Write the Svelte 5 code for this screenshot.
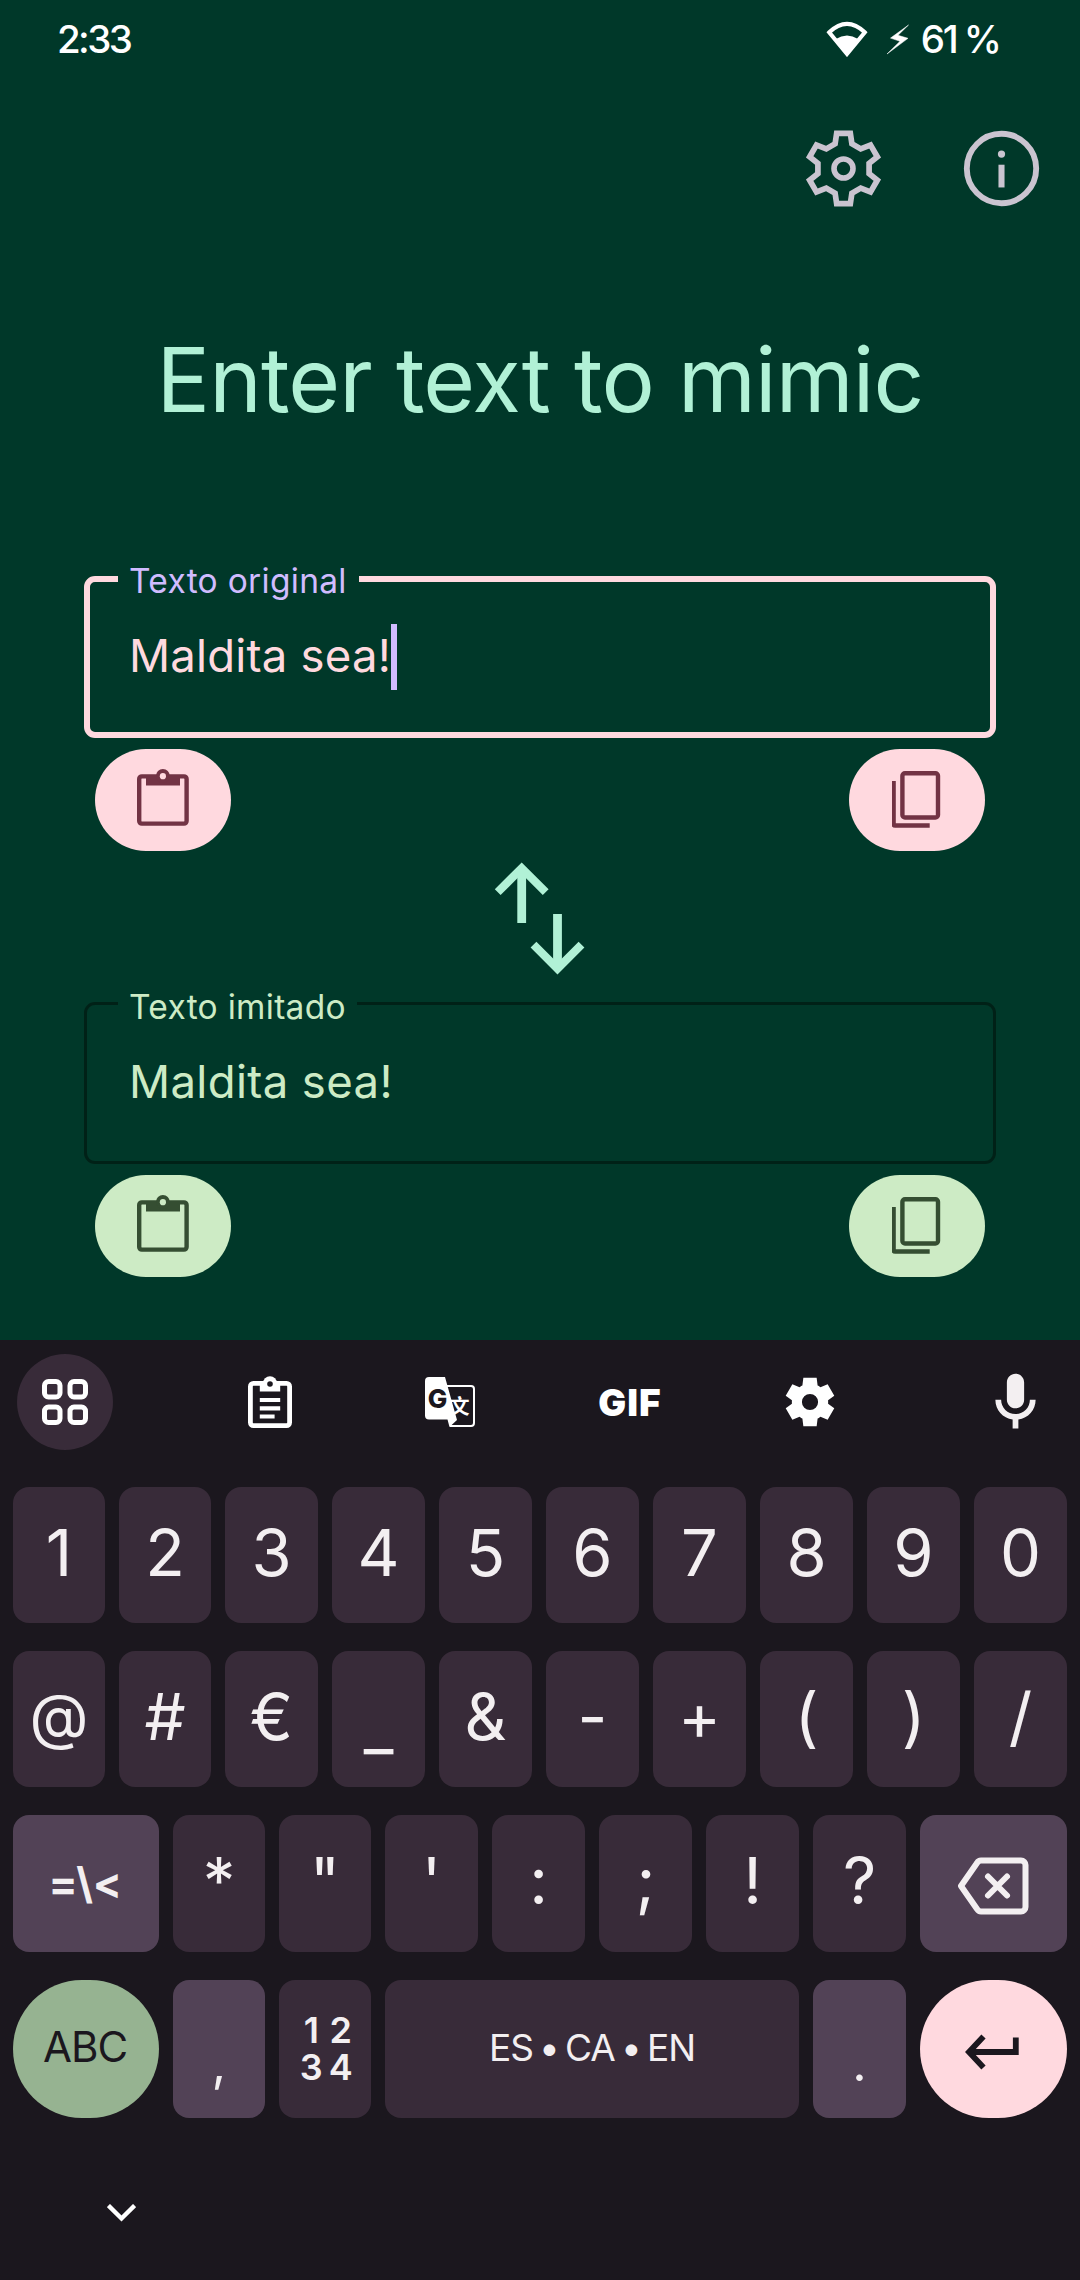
<script>
  const fields = [
    { id: 'original', label: 'Texto original', value: 'Maldita sea!', focused: true },
    { id: 'mimic', label: 'Texto imitado', value: 'Maldita sea!', focused: false }
  ];

  const digits = ['1', '2', '3', '4', '5', '6', '7', '8', '9', '0'];
  const symbols = ['@', '#', '€', '_', '&', '-', '+', '(', ')', '/'];
  const punctuation = ['*', '"', "'", ':', ';', '!', '?'];

  // One gear tooth, repeated every 60 degrees around the origin.
  const tooth = [[-11, -26.5], [-9.3, -38], [9.3, -38], [11, -26.5]];
  const gearPoints = [0, 1, 2, 3, 4, 5]
    .flatMap((k) => {
      const a = (k * Math.PI) / 3;
      return tooth.map(([x, y]) => [
        (x * Math.cos(a) - y * Math.sin(a)).toFixed(2),
        (x * Math.sin(a) + y * Math.cos(a)).toFixed(2)
      ]);
    })
    .join(' ');

  const gear =
    'm9.25 22-.4-3.2q-.325-.125-.612-.3-.288-.175-.563-.375L4.7 19.375l-2.75-4.75 2.575-1.95Q4.5 12.5 4.5 12.337v-.675q0-.162.025-.337L1.95 9.375l2.75-4.75 2.975 1.25q.275-.2.575-.375.3-.175.6-.3l.4-3.2h5.5l.4 3.2q.325.125.612.3.288.175.563.375l2.975-1.25 2.75 4.75-2.575 1.95q.025.175.025.337v.675q0 .163-.025.338l2.575 1.95-2.75 4.75-2.975-1.25q-.275.2-.575.375-.3.175-.6.3l-.4 3.2Z';
</script>

{#snippet pasteIcon()}
  <svg width="52" height="57" viewBox="0 0 52 57" fill="none">
    <rect x="2.2" y="7.4" width="47.4" height="47.2" rx="2.6" stroke="currentColor" stroke-width="4.4" />
    <path d="M9 6H43V16.5H9z" fill="currentColor" />
    <circle cx="25.9" cy="7" r="6.9" fill="currentColor" />
    <circle class="hole" cx="25.9" cy="7.2" r="3.1" />
  </svg>
{/snippet}

{#snippet copyIcon()}
  <svg width="50" height="62" viewBox=".8 -4.5 50 62" fill="none" stroke="currentColor" stroke-width="4.4">
    <rect x="11.2" y="2.7" width="35.6" height="44.3" rx="2.6" />
    <path d="M2.4 10.5v43a1.5 1.5 0 0 0 1.5 1.5H38.5" />
  </svg>
{/snippet}

{#snippet field(f)}
  <section class="field {f.focused ? 'primary' : 'secondary'}">
    <div class="outline">
      <span class="label">{f.label}</span>
      <div class="value">
        <span class="content">{f.value}</span>
        {#if f.focused}<i class="caret"></i>{/if}
      </div>
    </div>
    <div class="actions">
      <button class="pill" aria-label="Paste">{@render pasteIcon()}</button>
      <button class="pill" aria-label="Copy">{@render copyIcon()}</button>
    </div>
  </section>
{/snippet}

<div class="screen">
  <header class="status">
    <span class="time">2:33</span>
    <div class="indicators">
      <svg width="42" height="36" viewBox="0 0 42 36" fill="none">
        <path d="M3.2 11.3Q21-5.5 38.8 11.3L21 33z" stroke="#fff" stroke-width="4" />
        <path d="M9.8 18Q21 11 32.2 18L21 34z" fill="#fff" />
      </svg>
      <svg class="bolt" width="24" height="31" viewBox="-.5 -.5 24 31" fill="#fff" stroke="#fff" stroke-width=".5">
        <path d="M22 .5 4 13.6l9.5 3.2L.5 29.5 21.5 13.8l-10-3z" />
      </svg>
      <span class="battery">61 %</span>
    </div>
  </header>

  <nav class="top-actions">
    <svg width="91" height="91" viewBox="-45.5 -45.5 91 91" fill="none" stroke="#cac4d0">
      <clipPath id="gear-edge"><polygon points={gearPoints} /></clipPath>
      <polygon points={gearPoints} stroke-width="11.4" clip-path="url(#gear-edge)" />
      <circle r="9.5" stroke-width="5.6" />
    </svg>
    <svg width="91" height="91" viewBox="0 0 24 24" fill="none" stroke="#cac4d0">
      <circle cx="12" cy="12" r="9.15" stroke-width="1.55" />
      <path d="M12 11v6" stroke-width="1.6" />
      <circle cx="12" cy="8.2" r=".95" fill="#cac4d0" stroke="none" />
    </svg>
  </nav>

  <h1>Enter text to mimic</h1>

  {@render field(fields[0])}

  <div class="swap">
    <svg width="104" height="151" viewBox="0 0 104 151" fill="none" stroke="#b1f1d6">
      <path d="M33.7 17v55" stroke-width="8.8" />
      <path d="M9.7 41.2l24-24 24 24" stroke-width="8.2" />
      <path d="M69.5 63v55" stroke-width="8.8" />
      <path d="M45.5 93.6l24 24 24-24" stroke-width="8.2" />
    </svg>
  </div>

  {@render field(fields[1])}

  <div class="keyboard">
    <div class="tools">
      <div class="apps">
        <svg width="46" height="46" viewBox="0 0 46 46" fill="none" stroke="#fff" stroke-width="5">
          <rect x="2.5" y="2.5" width="15.5" height="15.5" rx="4" />
          <rect x="28" y="2.5" width="15.5" height="15.5" rx="4" />
          <rect x="2.5" y="28" width="15.5" height="15.5" rx="4" />
          <rect x="28" y="28" width="15.5" height="15.5" rx="4" />
        </svg>
      </div>
      <svg width="44" height="52" viewBox="0 0 44 52" fill="none">
        <rect x="2.4" y="7.4" width="39.2" height="42.2" rx="3" stroke="#fff" stroke-width="4.8" />
        <path d="M11.8 6h20.4v9.5H11.8z" fill="#fff" />
        <circle cx="22" cy="7.2" r="7" fill="#fff" />
        <circle cx="22" cy="8" r="2.8" fill="#1b171e" />
        <path d="M11.8 24h20.4M11.8 32.3h20.4M11.8 40.5h14.8" stroke="#fff" stroke-width="4.2" />
      </svg>
      <svg width="50" height="50" viewBox="0 0 50 50">
        <path d="M20 9H46a3 3 0 0 1 3 3V46a3 3 0 0 1-3 3H25" fill="none" stroke="#fff" stroke-width="2" />
        <path d="M4 0H20L32 43 24.5 50 22.5 42.5H4a4 4 0 0 1-4-4V4a4 4 0 0 1 4-4z" fill="#fff" />
        <text class="g-mark" x="12.5" y="31" text-anchor="middle">G</text>
        <text class="han-mark" x="34.5" y="36.5" text-anchor="middle">文</text>
      </svg>
      <span class="gif">GIF</span>
      <svg width="58" height="58" viewBox="0 0 24 24" fill="#fff">
        <path fill-rule="evenodd" d={gear + 'M15.35 12a3.35 3.35 0 1 0-6.7 0a3.35 3.35 0 1 0 6.7 0z'} />
      </svg>
      <svg class="mic" width="69" height="69" viewBox="0 0 24 24" fill="#f3eff1">
        <path
          d="M12 14c1.66 0 3-1.34 3-3V5c0-1.66-1.34-3-3-3S9 3.34 9 5v6c0 1.66 1.34 3 3 3zm5-3c0 2.76-2.24 5-5 5s-5-2.24-5-5H5c0 3.53 2.61 6.43 6 6.92V21h2v-3.08c3.39-.49 6-3.39 6-6.92h-2z"
        />
      </svg>
    </div>

    <div class="rows">
      <div class="row ten">
        {#each digits as key}<div class="key">{key}</div>{/each}
      </div>
      <div class="row ten">
        {#each symbols as key}<div class="key" class:at={key === '@'} class:drop={key === '_'}>{key}</div>{/each}
      </div>
      <div class="row nine">
        <div class="key accent more">=\&lt;</div>
        {#each punctuation as key}<div class="key">{key}</div>{/each}
        <div class="key accent backspace">
          <svg width="72" height="58" viewBox="0 0 72 58" fill="none" stroke="#f3eff1" stroke-width="6" stroke-linejoin="round">
            <path d="M24 3.5H64a4.5 4.5 0 0 1 4.5 4.5V50a4.5 4.5 0 0 1-4.5 4.5H24a4.5 4.5 0 0 1-3.8-2.2L4 29 20.2 5.7A4.5 4.5 0 0 1 24 3.5z" />
            <path d="M31 19.5 50 38.5M50 19.5 31 38.5" stroke-linecap="round" />
          </svg>
        </div>
      </div>
      <div class="row bottom">
        <div class="key round abc">ABC</div>
        <div class="key accent low">,</div>
        <div class="key numpad"><span>1</span><span>2</span><span>3</span><span>4</span></div>
        <div class="key space">ES • CA • EN</div>
        <div class="key accent low">.</div>
        <div class="key round enter">
          <svg width="54" height="36" viewBox="0 0 54 36" fill="none" stroke="#1b171e" stroke-width="5.8">
            <path d="M4 18H50.8V3.5" />
            <path d="M18.5 2.5 4 18 18.5 33.5" />
          </svg>
        </div>
      </div>
    </div>

    <svg class="dismiss" width="29" height="18" viewBox="0 0 29 18" fill="none" stroke="#fff" stroke-width="4.4">
      <path d="M1.4 1.5 14.5 14.5 27.6 1.5" />
    </svg>
  </div>
</div>

<style>
  :global(body) {
    background: #003829;
  }

  .screen {
    box-sizing: border-box;
    width: 1080px;
    height: 2280px;
    display: flex;
    flex-direction: column;
    overflow: hidden;
    background: #003829;
    font-family: Inter, Roboto, 'Liberation Sans', sans-serif;
  }

  svg {
    display: block;
    flex: none;
  }

  .status {
    height: 78px;
    flex: none;
    display: flex;
    align-items: center;
    justify-content: space-between;
    padding: 0 80px 0 57px;
    color: #fff;
    font-size: 38.5px;
    font-weight: 500;
  }

  .time {
    letter-spacing: -2.6px;
  }

  .indicators {
    display: flex;
    align-items: center;
  }

  .bolt {
    margin: 0 11px 0 18px;
  }

  .battery {
    letter-spacing: -2.1px;
    word-spacing: -1px;
  }

  .top-actions {
    display: flex;
    justify-content: flex-end;
    gap: 67px;
    margin-top: 45px;
    padding-right: 33px;
  }

  h1 {
    margin: 112px 0 142px;
    color: #b1f1d6;
    font-size: 89px;
    line-height: 108px;
    font-weight: 400;
    text-align: center;
    white-space: nowrap;
    letter-spacing: -0.9px;
  }

  .field {
    padding: 0 84px;
  }

  .outline {
    position: relative;
    box-sizing: border-box;
    height: 162px;
    border-radius: 11px;
  }

  .primary .outline {
    border: 6px solid #ffd9df;
    padding: 42px 0 0 39px;
    color: #ffd9df;
  }

  .secondary .outline {
    border: 3px solid #002117;
    padding: 45px 0 0 42px;
    color: #cdebc5;
  }

  .label {
    position: absolute;
    top: -21px;
    left: 28px;
    width: 241px;
    box-sizing: border-box;
    padding-left: 11px;
    background: #003829;
    color: #d0bcff;
    font-size: 33.5px;
    line-height: 40px;
    letter-spacing: 0.3px;
    white-space: nowrap;
  }

  .secondary .label {
    top: -18px;
    left: 31px;
    width: 239px;
    color: #cdebc5;
  }

  .value {
    display: flex;
    align-items: center;
    height: 66px;
    font-size: 45.5px;
    letter-spacing: 0.2px;
  }

  .secondary .value {
    letter-spacing: 0.35px;
  }

  .content {
    padding-bottom: 3px;
  }

  .caret {
    width: 6px;
    height: 66px;
    background: #d0bcff;
  }

  .actions {
    display: flex;
    justify-content: space-between;
    padding: 11px 11px 0;
  }

  .pill {
    display: flex;
    align-items: center;
    justify-content: center;
    width: 136px;
    height: 102px;
    padding: 0 0 6px;
    border: 0;
    border-radius: 51px;
    background: #ffd9df;
    color: #723344;
  }

  .hole {
    fill: #ffd9df;
  }

  .secondary .pill {
    background: #cdebc5;
    color: #354e32;
  }

  .secondary .hole {
    fill: #cdebc5;
  }

  .swap {
    height: 151px;
    display: flex;
    justify-content: center;
  }

  .keyboard {
    flex: none;
    height: 940px;
    margin-top: auto;
    background: #1b171e;
    color: #f3eff1;
  }

  .tools {
    display: grid;
    grid-template-columns: repeat(5, 180px) 1fr;
    align-items: center;
    justify-items: center;
    height: 124px;
    margin-bottom: 23px;
  }

  .apps {
    justify-self: start;
    margin-left: 17px;
    width: 96px;
    height: 96px;
    border-radius: 50%;
    background: #382b39;
    display: flex;
    align-items: center;
    justify-content: center;
  }

  .g-mark {
    font: 800 26px Inter, sans-serif;
    fill: #1b171e;
  }

  .han-mark {
    font: 700 20px 'Noto Sans CJK SC', sans-serif;
    fill: #fff;
  }

  .gif {
    color: #fff;
    font-size: 37px;
    font-weight: 900;
    letter-spacing: 1px;
  }

  .mic {
    justify-self: end;
    margin-right: 30px;
  }

  .rows {
    display: flex;
    flex-direction: column;
    gap: 28px;
    padding: 0 13px;
  }

  .row {
    display: grid;
    column-gap: 14px;
  }

  .row.ten {
    height: 136px;
    grid-template-columns: 92px 92px repeat(8, 93px);
  }

  .row.nine {
    height: 137px;
    grid-template-columns: 146px 92px 92px repeat(5, 93px) 147px;
  }

  .row.bottom {
    height: 138px;
    grid-template-columns: 146px 92px 92px 414px 93px 147px;
  }

  .key {
    box-sizing: border-box;
    display: flex;
    align-items: center;
    justify-content: center;
    padding-bottom: 5px;
    border-radius: 16px;
    background: #382b39;
    font-size: 65px;
    line-height: 1.2;
  }

  .key.at {
    font-size: 61px;
  }

  .key.drop {
    padding: 14px 0 0;
  }

  .key.accent {
    background: #524256;
  }

  .key.more {
    padding: 0;
    font-size: 43px;
    font-weight: 700;
    letter-spacing: 1.5px;
  }

  .key.backspace {
    padding: 5px 2px 0 0;
  }

  .key.round {
    border-radius: 69px;
  }

  .key.abc {
    background: #96b391;
    color: #1b171e;
    font-size: 42px;
    padding: 0 2px 3px 0;
    letter-spacing: -1px;
  }

  .key.low {
    font-size: 50px;
    padding: 28px 0 0;
  }

  .key.numpad {
    display: grid;
    grid-template-columns: 22px 22px;
    grid-template-rows: 37.5px 37.5px;
    column-gap: 7.5px;
    align-content: center;
    justify-items: center;
    padding: 0 0 0 2px;
    font-size: 36px;
    line-height: 37.5px;
    font-weight: 600;
  }

  .key.space {
    font-size: 37px;
    padding-bottom: 1px;
    letter-spacing: -1.1px;
    word-spacing: -3px;
  }

  .key.enter {
    background: #ffd9df;
    padding: 5px 3px 0 0;
  }

  .dismiss {
    margin: 86px 0 0 107px;
  }
</style>
